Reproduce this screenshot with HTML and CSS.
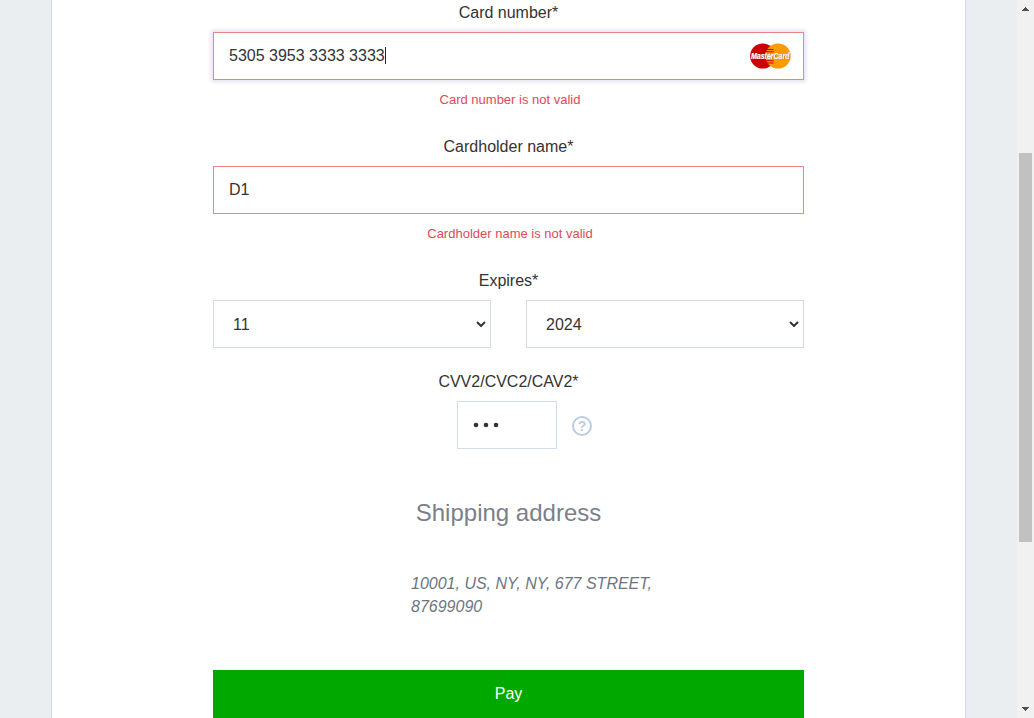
FILE: index.html
```html
<!DOCTYPE html>
<html lang="en">
<head>
<meta charset="utf-8">
<title>Payment</title>
<link rel="stylesheet" href="styles.css">
</head>
<body>
<div class="page">
  <main class="sheet">
    <form class="form">
      <div class="label">Card number*</div>
      <div class="field field-invalid field-focus">
        <span class="value">5305 3953 3333 3333</span><span class="caret"></span>
        <svg class="brand" width="48" height="26" viewBox="0 0 48 26">
          <circle cx="16.7" cy="13" r="12.6" fill="#cc0000"/>
          <circle cx="32" cy="13" r="12.6" fill="#ff9900"/>
          <path d="M20.5 6.5h7M19.7 8.7h8M19.7 17.8h8M20.5 20h7" stroke="#cc0000" stroke-width="1.1"/>
          <text class="brand-text brand-shade" x="5.4" y="16.4" textLength="38.5" lengthAdjust="spacingAndGlyphs">MasterCard</text>
          <text class="brand-text" x="5" y="16" textLength="38.5" lengthAdjust="spacingAndGlyphs">MasterCard</text>
        </svg>
      </div>
      <div class="error">Card number is not valid</div>

      <div class="label">Cardholder name*</div>
      <div class="field field-invalid"><span class="value">D1</span></div>
      <div class="error">Cardholder name is not valid</div>

      <div class="label">Expires*</div>
      <div class="expiry">
        <div class="field select">
          <span class="value">11</span>
          <svg class="chevron" width="10" height="6" viewBox="0 0 10 6"><path d="M1 1l4 4 4-4" fill="none" stroke="#333" stroke-width="2"/></svg>
        </div>
        <div class="field select">
          <span class="value">2024</span>
          <svg class="chevron" width="10" height="6" viewBox="0 0 10 6"><path d="M1 1l4 4 4-4" fill="none" stroke="#333" stroke-width="2"/></svg>
        </div>
      </div>

      <div class="label label-cvv">CVV2/CVC2/CAV2*</div>
      <div class="cvv">
        <div class="field field-cvv">
          <svg width="26" height="6" viewBox="0 0 26 6" fill="#333"><circle cx="3" cy="3" r="2.3"/><circle cx="13" cy="3" r="2.3"/><circle cx="23" cy="3" r="2.3"/></svg>
        </div>
        <svg class="help" width="20" height="20" viewBox="0 0 20 20">
          <circle cx="10" cy="10" r="9" fill="none" stroke="#bccce0" stroke-width="2"/>
          <text class="help-mark" x="10" y="15">?</text>
        </svg>
      </div>

      <h2 class="heading">Shipping address</h2>
      <address class="address">10001, US, NY, NY, 677 STREET,<br>87699090</address>
      <div class="pay">Pay</div>
    </form>
  </main>
  <div class="scrollbar">
    <svg width="7" height="4" viewBox="0 0 7 4" shape-rendering="crispEdges"><path d="M3 0h1v1h1v1h1v1h1v1H0V3h1V2h1V1h1z" fill="#505050"/></svg>
    <div class="thumb"></div>
    <svg width="7" height="4" viewBox="0 0 7 4" shape-rendering="crispEdges"><path d="M0 0h7v1H6v1H5v1H4v1H3V3H2V2H1V1H0z" fill="#505050"/></svg>
  </div>
</div>
</body>
</html>
```
FILE: styles.css
```css
* { box-sizing: border-box; }
body {
  margin: 0;
  background: #eaeef1;
  color: #333;
  font: 16px/24px "Liberation Sans", Arial, sans-serif;
  overflow: hidden;
}
.page { display: flex; height: 718px; }
.sheet {
  flex: 1;
  margin: 0 51px;
  padding: 0 161px;
  background: #fff;
  border: solid #d3dce6;
  border-width: 0 1px;
}
.form { display: flex; flex-direction: column; width: 591px; }
.label { height: 31px; padding-top: 1px; margin-bottom: 1px; text-align: center; }
.field {
  display: flex;
  align-items: center;
  height: 48px;
  padding: 0 9px 0 15px;
  border: 1px solid #d3dce8;
  background: #fff;
}
.field-invalid { border-color: #f08585; }
.field-focus { box-shadow: 0 0 4px 2px #e6e2ee; }
.caret { width: 1px; height: 17px; margin-bottom: 1px; background: #222; }
.brand { margin-left: auto; overflow: visible; }
.brand-text { font: italic bold 8.5px "Liberation Sans", Arial, sans-serif; fill: #fff; stroke: #fff; stroke-width: 0.2px; }
.brand-shade { fill: #80404a; stroke: none; }
.error {
  height: 54px;
  padding: 8px 0 0 3px;
  color: #e04a55;
  font-size: 13px;
  text-align: center;
}
.expiry { display: flex; gap: 35px; }
.select { flex: 1; justify-content: space-between; padding: 0 4px 0 19px; }
.select .value { padding-top: 2px; }
.label-cvv { margin-top: 21px; }
.cvv { display: flex; align-items: center; gap: 15px; padding-left: 244px; }
.field-cvv { width: 100px; }
.help { margin-top: 2px; }
.help-mark { font: bold 14px "Liberation Sans", Arial, sans-serif; fill: #bccce0; text-anchor: middle; }
.heading {
  margin: 48px 0 0;
  color: #7b7f8a;
  font-size: 24px;
  font-weight: 400;
  line-height: 32px;
  text-align: center;
}
.address { margin: 43px 0 0 198px; color: #6c757d; line-height: 23px; }
.pay {
  height: 48px;
  margin-top: 52px;
  background: #00a800;
  color: #fff;
  line-height: 47px;
  text-align: center;
}
.scrollbar {
  display: flex;
  flex-direction: column;
  align-items: center;
  width: 17px;
  padding: 7px 0;
  background: #f1f1f1;
}
.thumb { width: 13px; height: 389px; margin: 142px 0 165px; background: #c1c1c1; }
```
